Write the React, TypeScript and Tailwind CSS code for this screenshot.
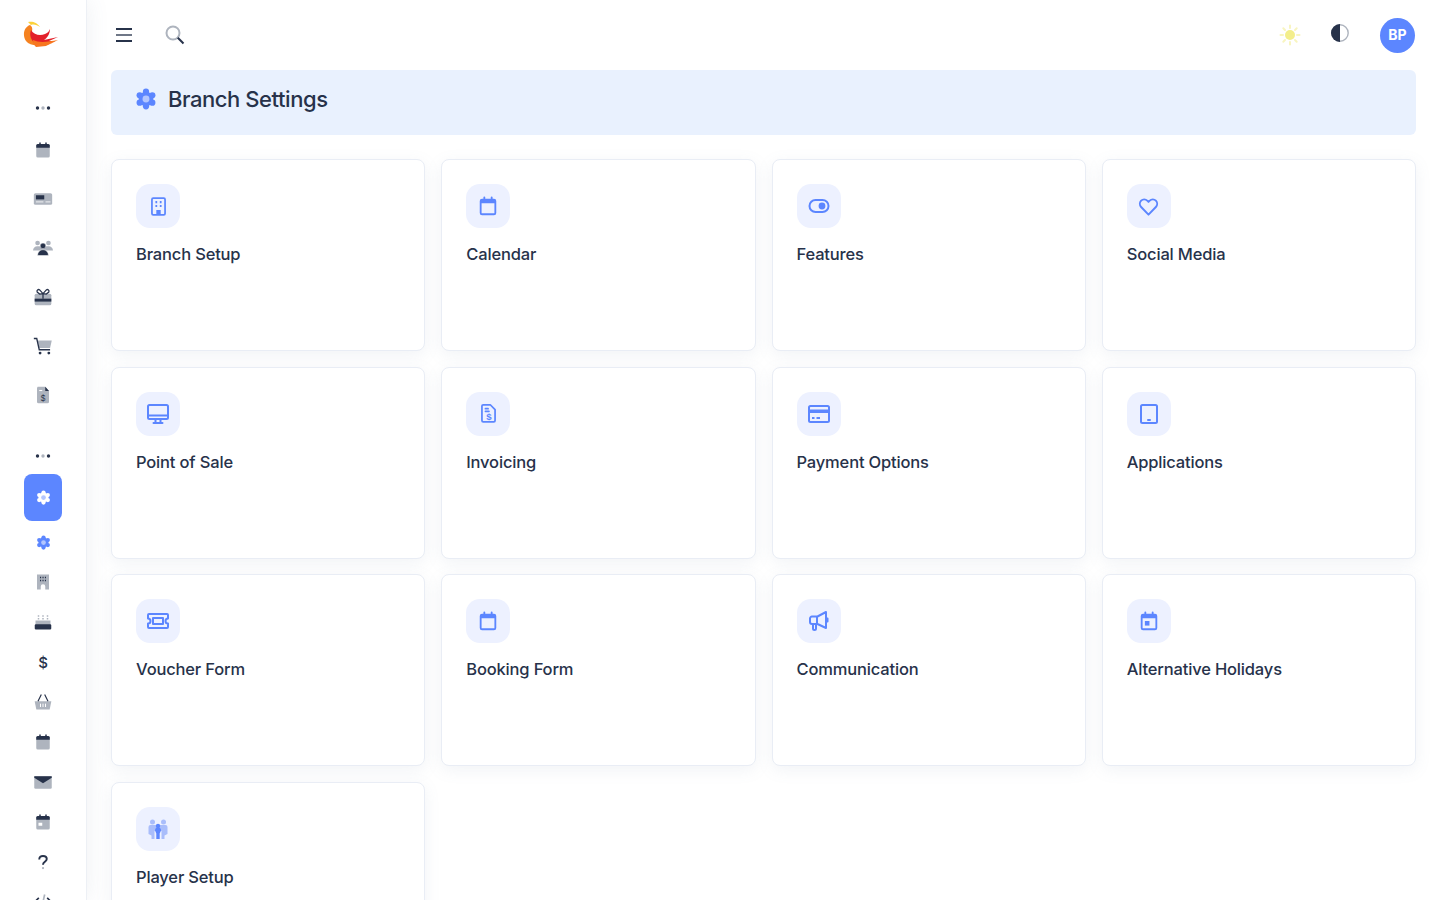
import type { ReactNode } from "react";

const DARK = "#27324a";
const MUTED = "#aeb4be";
const BLUE = "#5c86ff";

function Svg({ size = 18, children }: { size?: number; children: ReactNode }) {
  return (
    <svg width={size} height={size} viewBox="0 0 24 24" fill="none" className="block">
      {children}
    </svg>
  );
}

const lobes = [
  [12, 4],
  [18.9, 8],
  [18.9, 16],
  [12, 20],
  [5.1, 16],
  [5.1, 8],
];

function Gear({ color, core, size }: { color: string; core: string; size: number }) {
  return (
    <Svg size={size}>
      {lobes.map(([x, y]) => (
        <circle key={`${x}-${y}`} cx={x} cy={y} r="3.4" fill={color} />
      ))}
      <circle cx="12" cy="12" r="8" fill={color} />
      <circle cx="12" cy="12" r="3.8" fill={core} />
    </Svg>
  );
}

function Dots() {
  return (
    <svg width="16" height="4" viewBox="0 0 16 4" className="block">
      <circle cx="2.5" cy="2" r="1.7" fill={DARK} />
      <circle cx="8" cy="2" r="1.7" fill={MUTED} />
      <circle cx="13.5" cy="2" r="1.7" fill={DARK} />
    </svg>
  );
}

function SideCalendar({ children }: { children?: ReactNode }) {
  return (
    <Svg>
      <rect x="3" y="4" width="18" height="18" rx="2" fill={MUTED} />
      <path d="M3 6a2 2 0 0 1 2-2h14a2 2 0 0 1 2 2v3H3z" fill={DARK} />
      <path d="M8 2v4M16 2v4" stroke={DARK} strokeWidth="2" />
      {children}
    </Svg>
  );
}

const sideTop: ReactNode[] = [
  <SideCalendar key="a" />,
  <Svg key="b" size={20}>
    <rect x="1" y="5" width="22" height="14" rx="2" fill={MUTED} />
    <rect x="3.5" y="7.5" width="10" height="5" fill={DARK} />
    <path d="M3.5 15.5h9M15 15.5h6" stroke="#fff" strokeWidth="1" />
  </Svg>,
  <Svg key="c" size={20}>
    <circle cx="5.5" cy="6" r="2.8" fill={MUTED} />
    <circle cx="18.5" cy="6" r="2.8" fill={MUTED} />
    <path d="M0 15c0-3 2.5-5 5-5h14c2.500 0 5 2 5 5H0z" fill={MUTED} />
    <circle cx="12" cy="9.500" r="3.400" fill={DARK} stroke="#fff" strokeWidth=".6" />
    <path d="M5.500 21c0-4 2.500-7 6.500-7s6.500 3 6.500 7z" fill={DARK} stroke="#fff" strokeWidth=".6" />
  </Svg>,
  <Svg key="d" size={20}>
    <rect x="2" y="8" width="20" height="14" rx="2" fill={MUTED} />
    <rect x="2" y="14" width="20" height="3.500" fill={DARK} />
    <path d="M12 8 8 3.500a2 2 0 0 0-3 2.500L8 8.500zM12 8l4-4.500a2 2 0 0 1 3 2.500l-3 2.500zM12 8v6" stroke={DARK} strokeWidth="1.500" />
  </Svg>,
  <Svg key="e" size={20}>
    <path d="M5.500 5.500h17l-2 9h-13z" fill={MUTED} />
    <path d="M1 3h3.500l3 13.500h13" stroke={DARK} strokeWidth="1.600" />
    <circle cx="8.500" cy="20.500" r="1.700" fill={DARK} />
    <circle cx="19" cy="20.500" r="1.700" fill={DARK} />
  </Svg>,
  <Svg key="f" size={18}>
    <path d="M5 1h10l5 5.500V21a2 2 0 0 1-2 2H6a2 2 0 0 1-2-2V2z" fill={MUTED} />
    <path d="M15 1l5 5.500h-5z" fill={DARK} />
    <path d="M7 6h4" stroke="#fff" strokeWidth="1.500" />
    <text x="12" y="20" textAnchor="middle" fontSize="11" fontFamily="'Liberation Sans', sans-serif" fill={DARK}>$</text>
  </Svg>,
];

const sideBottom: ReactNode[] = [
  <Gear key="g" size={15} color={BLUE} core="#b3c6ff" />,
  <Svg key="h" size={18}>
    <path d="M4 2h16v20h-5v-4a3 3 0 0 0-6 0v4H4z" fill={MUTED} />
    <path d="M8 6h1.500M11.300 6h1.500M14.500 6H16M8 10h1.500M11.300 10h1.500M14.500 10H16" stroke={DARK} strokeWidth="1.800" />
  </Svg>,
  <Svg key="i" size={18}>
    <path d="M2 10h20v6H2z" fill={MUTED} />
    <rect x="1" y="15" width="22" height="7" rx="1.500" fill={DARK} />
    <path d="M6 3v7M12 3v7M18 3v7" stroke={MUTED} strokeWidth="2" strokeDasharray="2 1.500" />
  </Svg>,
  <Svg key="j" size={20}>
    <text x="12" y="19" textAnchor="middle" fontSize="18" fontWeight="500" fontFamily="Inter, sans-serif" fill={DARK}>$</text>
  </Svg>,
  <Svg key="k" size={20}>
    <path d="M2 11h20l-2 10H4z" fill={MUTED} />
    <path d="M6 11l4-8M18 11l-4-8" stroke={DARK} strokeWidth="1.400" />
    <path d="M9 14v4M12 14v4M15 14v4" stroke="#fff" strokeWidth="1.200" />
  </Svg>,
  <SideCalendar key="l" />,
  <Svg key="m" size={20}>
    <rect x="1.500" y="5" width="21" height="15" rx="1.500" fill={MUTED} />
    <path d="M1.500 5h21v2L12 13.500 1.500 7z" fill={DARK} />
  </Svg>,
  <SideCalendar key="n">
    <rect x="6" y="13" width="5" height="4" fill="#fff" />
  </SideCalendar>,
  <Svg key="o" size={18}>
    <path d="M7 8.500C7 5.500 9 4 12 4s5 1.500 5 4c0 3.500-5 4-5 7.500" stroke={DARK} strokeWidth="2.600" />
    <circle cx="12" cy="20" r="1.500" fill={MUTED} />
  </Svg>,
  <Svg key="p" size={20}>
    <path d="M7 7l-5 5 5 5M17 7l5 5-5 5" stroke={DARK} strokeWidth="2" />
    <path d="M14 3l-4 18" stroke={MUTED} strokeWidth="2" />
  </Svg>,
];

const stroke = { stroke: BLUE, strokeWidth: 2, strokeLinecap: "round" as const, strokeLinejoin: "round" as const };

function CalendarBase({ children }: { children?: ReactNode }) {
  return (
    <>
      <rect x="4" y="5" width="16" height="16" rx="1.500" {...stroke} />
      <path d="M4 6.500A1.500 1.500 0 0 1 5.500 5h13A1.500 1.500 0 0 1 20 6.500V9H4z" fill={BLUE} />
      <path d="M8 2.500v3M16 2.500v3" {...stroke} />
      {children}
    </>
  );
}

const cards: { label: string; icon: ReactNode }[] = [
  {
    label: "Branch Setup",
    icon: (
      <Svg size={21}>
        <rect x="4.500" y="2.500" width="15" height="19" rx="1.500" {...stroke} />
        <path d="M8.500 7h2M13.500 7h2M8.500 11.500h2M13.500 11.500h2" {...stroke} strokeWidth={2.400} strokeLinecap="butt" />
        <path d="M9.500 21v-5h5v5" fill={BLUE} />
      </Svg>
    ),
  },
  { label: "Calendar", icon: <Svg size={22}><CalendarBase /></Svg> },
  {
    label: "Features",
    icon: (
      <Svg size={24}>
        <rect x="2.500" y="6" width="19" height="12" rx="6" {...stroke} />
        <circle cx="15" cy="12" r="3.400" fill={BLUE} />
      </Svg>
    ),
  },
  {
    label: "Social Media",
    icon: (
      <Svg size={23}>
        <path d="M12 20.500 4.300 12.500a4.800 4.800 0 0 1 0-6.600 4.500 4.500 0 0 1 6.400 0L12 7.200l1.300-1.300a4.500 4.500 0 0 1 6.400 0 4.800 4.800 0 0 1 0 6.600z" {...stroke} />
      </Svg>
    ),
  },
  {
    label: "Point of Sale",
    icon: (
      <Svg size={24}>
        <rect x="2" y="3" width="20" height="14" rx="1.500" {...stroke} />
        <path d="M2 13.500h20M9.500 17v3.500M14.500 17v3.500M7.500 21h9" {...stroke} />
      </Svg>
    ),
  },
  {
    label: "Invoicing",
    icon: (
      <Svg size={21}>
        <path d="M6 2h8l5.500 5.500V20a1.500 1.500 0 0 1-1.500 1.500H6A1.500 1.500 0 0 1 4.500 20V3.500A1.500 1.500 0 0 1 6 2z" {...stroke} />
        <path d="M8.500 6.500h3M8.500 9.500h4" {...stroke} />
        <text x="12.500" y="19.500" textAnchor="middle" fontSize="11" fontWeight="700" fontFamily="'Liberation Sans', sans-serif" fill={BLUE}>$</text>
      </Svg>
    ),
  },
  {
    label: "Payment Options",
    icon: (
      <Svg size={24}>
        <rect x="2" y="4" width="20" height="16" rx="1.500" {...stroke} />
        <path d="M2 7.500h20v3.500H2z" fill={BLUE} />
        <path d="M5 16h2.500M9.500 16H13" {...stroke} strokeLinecap="butt" />
      </Svg>
    ),
  },
  {
    label: "Applications",
    icon: (
      <Svg size={24}>
        <rect x="4" y="3" width="16" height="18" rx="1.500" {...stroke} />
        <path d="M11 18h2" {...stroke} />
      </Svg>
    ),
  },
  {
    label: "Voucher Form",
    icon: (
      <Svg size={24}>
        <path d="M3 5h18a1 1 0 0 1 1 1v3.500a2.500 2.500 0 0 0 0 5V18a1 1 0 0 1-1 1H3a1 1 0 0 1-1-1v-3.500a2.500 2.500 0 0 0 0-5V6a1 1 0 0 1 1-1z" {...stroke} />
        <rect x="7" y="9" width="10" height="6" {...stroke} />
      </Svg>
    ),
  },
  { label: "Booking Form", icon: <Svg size={22}><CalendarBase /></Svg> },
  {
    label: "Communication",
    icon: (
      <Svg size={24}>
        <path d="M3 9.500a2 2 0 0 1 2-2h5.500L19 3v16l-8.500-4H5a2 2 0 0 1-2-2zM10 7.500v7.500M6 15v4.500a1.500 1.500 0 0 0 3 0V15M19 9.500h1.500v3H19" {...stroke} />
      </Svg>
    ),
  },
  {
    label: "Alternative Holidays",
    icon: (
      <Svg size={22}>
        <CalendarBase>
          <rect x="7.500" y="12" width="5" height="5" fill={BLUE} />
        </CalendarBase>
      </Svg>
    ),
  },
  {
    label: "Player Setup",
    icon: (
      <Svg size={24}>
        <circle cx="6.500" cy="5" r="2.500" fill="#a9bdfb" />
        <circle cx="17.500" cy="5" r="2.500" fill="#a9bdfb" />
        <path d="M2.500 10a2 2 0 0 1 2-2h15a2 2 0 0 1 2 2v7l-3 1.500V22h-3v-8H8.500v8h-3v-3.500l-3-1.500z" fill="#a9bdfb" />
        <circle cx="12" cy="9" r="2.200" fill={BLUE} />
        <path d="M9 13.500a3 3 0 0 1 6 0l-1.300 3V22h-3.400v-5.500z" fill={BLUE} />
      </Svg>
    ),
  },
];

function Logo() {
  return (
    <svg width="38" height="28" viewBox="0 0 38 28" className="block">
      <path d="M5 1c4-1 9 0 12 5-3-2-6-3-9-2z" fill="#fcd23a" />
      <path d="M7 4C1 6-1 14 3 20c3 4 9 5 15 4-6-2-11-8-9-14 .5-2 .5-4-2-6z" fill="#f58220" />
      <path d="M8 9c3 5 9 6 14 4 3-1 4-3 5-5 0 5-3 9-6 11l14-3-9 4 6 0-8 3H13C8 20 6 14 8 9z" fill="#e3202a" />
      <path d="M10 19c6 3 14 2 25 0-6 3-8 4-12 6l-10 1c-2-2-3-4-3-7z" fill="#f7761f" />
    </svg>
  );
}

function Card({ label, icon }: { label: string; icon: ReactNode }) {
  return (
    <div className="h-[192px] rounded-lg border border-[#e9edf5] bg-white p-6 shadow-[0_4px_16px_rgba(120,135,170,0.1)]">
      <div className="flex h-11 w-11 items-center justify-center rounded-[14px] bg-[#edf1ff]">{icon}</div>
      <p className="mt-3.5 text-[16.5px] leading-6 font-medium tracking-[-0.01em] text-[#27324a]">{label}</p>
    </div>
  );
}

export default function App() {
  return (
    <div className="flex h-[900px] overflow-hidden bg-white font-['Inter','Liberation_Sans',sans-serif]">
      <aside className="relative z-10 flex w-[87px] shrink-0 flex-col items-center border-r border-[#edf0f5] bg-white shadow-[0_0_22px_rgba(90,105,135,0.1)]">
        <div className="mt-[21px] ml-[-3px] shrink-0">
          <Logo />
        </div>
        <div className="mt-[57px] shrink-0"><Dots /></div>
        <div className="mt-[15px] flex shrink-0 flex-col items-center">
          {sideTop.map((icon, i) => (
            <div key={i} className="flex h-[49px] w-[38px] items-center justify-center">{icon}</div>
          ))}
        </div>
        <div className="mt-[35px] shrink-0"><Dots /></div>
        <div className="mt-4 flex h-[47px] w-[38px] shrink-0 items-center justify-center rounded-lg bg-[#5c86ff]">
          <Gear size={15} color="#ffffff" core="#b3c6ff" />
        </div>
        <div className="mt-[1px] flex shrink-0 flex-col items-center">
          {sideBottom.map((icon, i) => (
            <div key={i} className="flex h-10 w-[38px] items-center justify-center">{icon}</div>
          ))}
        </div>
      </aside>

      <main className="min-w-0 flex-1 pr-6 pl-6">
        <header className="flex h-[70px] items-center">
          <div className="mb-px ml-[5px] flex flex-col gap-1">
            <span className="h-0.5 w-4 bg-[#27324a]" />
            <span className="h-0.5 w-4 bg-[#6f7787]" />
            <span className="h-0.5 w-4 bg-[#27324a]" />
          </div>
          <svg width="20" height="20" viewBox="0 0 20 20" className="mb-px ml-[33px]">
            <circle cx="8" cy="8" r="6.500" fill="none" stroke="#aeb4be" strokeWidth="2" />
            <path d="M12.800 12.800 18.500 18.500" stroke="#27324a" strokeWidth="2" />
          </svg>
          <div className="ml-auto flex items-center">
            <svg width="22" height="22" viewBox="0 0 22 22">
              <circle cx="11" cy="11" r="5" fill="#f3ee8b" />
              <path d="M11 1.500v2.500M11 18v2.500M1.500 11H4M18 11h2.500M4.300 4.300 6 6M16 16l1.700 1.700M4.300 17.700 6 16M16 6l1.700-1.700" stroke="#f8f5c0" strokeWidth="2" strokeLinecap="round" />
            </svg>
            <svg width="20" height="20" viewBox="0 0 20 20" className="mb-1 ml-[29px]">
              <circle cx="10" cy="10" r="8.200" fill="#fff" stroke="#aeb4be" strokeWidth="1.400" />
              <path d="M10 1a9 9 0 0 0 0 18z" fill="#27324a" />
            </svg>
            <div className="mr-px ml-[30px] flex h-[35px] w-[35px] items-center justify-center rounded-full bg-[#5c86ff] text-sm font-bold text-white">
              BP
            </div>
          </div>
        </header>

        <div className="flex h-[65px] items-center gap-[11px] rounded-md bg-[#e9f1fe] pb-[7px] pl-6">
          <Gear size={22} color={BLUE} core="#b3c6ff" />
          <h1 className="text-[22px] font-medium tracking-[-0.02em] text-[#27324a]">Branch Settings</h1>
        </div>

        <div className="mt-6 grid grid-cols-4 gap-x-4 gap-y-[15.7px]">
          {cards.map((c) => (
            <Card key={c.label} label={c.label} icon={c.icon} />
          ))}
        </div>
      </main>
    </div>
  );
}
